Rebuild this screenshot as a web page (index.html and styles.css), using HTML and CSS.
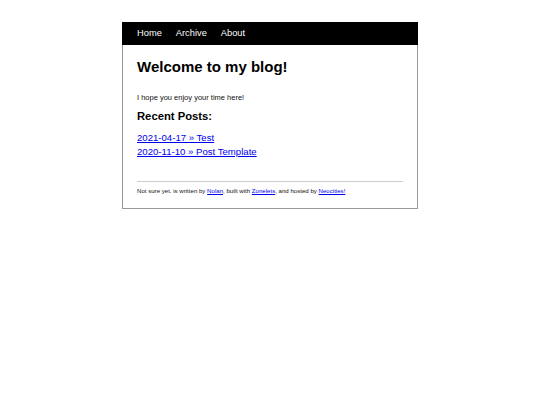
FILE: index.html
```html
<!DOCTYPE html>
<html lang="en">
<head>
<meta charset="utf-8">
<title>Welcome to my blog!</title>
<link rel="stylesheet" href="styles.css">
</head>
<body>
<div class="container">
  <nav class="nav">
    <a class="nav-link" href="#">Home</a>
    <a class="nav-link" href="#">Archive</a>
    <a class="nav-link" href="#">About</a>
  </nav>
  <main class="content">
    <h1 class="title">Welcome to my blog!</h1>
    <p class="intro">I hope you enjoy your time here!</p>
    <h2 class="subtitle">Recent Posts:</h2>
    <ul class="posts">
      <li><a class="post-link" href="#">2021-04-17 » Test</a></li>
      <li><a class="post-link" href="#">2020-11-10 » Post Template</a></li>
    </ul>
    <hr class="rule">
    <footer class="footer">Not sure yet. is written by <a class="foot-link" href="#">Nolan</a>, built with <a class="foot-link" href="#">Zonelets</a>, and hosted by <a class="foot-link" href="#">Neocities!</a></footer>
  </main>
</div>
</body>
</html>
```

FILE: styles.css
```css
html, body {
  margin: 0;
  padding: 0;
  background: #fff;
}
body {
  font-family: "Liberation Sans", Arial, sans-serif;
  color: #000;
  padding-top: 22px;
}
.container {
  box-sizing: border-box;
  width: 296px;
  margin: 0 auto;
  border: 1px solid #999;
}
.nav {
  display: flex;
  align-items: center;
  gap: 14px;
  height: 23px;
  margin: -1px -1px 0 -1px;
  padding: 0 15px;
  background: #000;
}
.nav-link {
  color: #fff;
  text-decoration: none;
  font-size: 9.3px;
  line-height: 1;
  padding-top: 1px;
}
.content {
  padding: 0 14px 14px 14px;
}
.title {
  margin: 13px 0 0 0;
  font-size: 15px;
  font-weight: bold;
  line-height: 17px;
}
.intro {
  margin: 18px 0 0 0;
  font-size: 7.5px;
  line-height: 9px;
  color: #111;
}
.subtitle {
  margin: 8px 0 0 0;
  font-size: 11.25px;
  font-weight: bold;
  line-height: 13px;
}
.posts {
  list-style: none;
  margin: 8px 0 0 0;
  padding: 0;
}
.posts li {
  font-size: 9.6px;
  line-height: 14px;
}
.post-link {
  color: #0000ee;
}
.rule {
  margin: 22px 0 0 0;
  border: 0;
  border-top: 1px solid #ccc;
  height: 0;
}
.footer {
  margin-top: 5px;
  font-size: 6.1px;
  line-height: 7px;
  color: #111;
}
.foot-link {
  color: #0000ee;
}
```
